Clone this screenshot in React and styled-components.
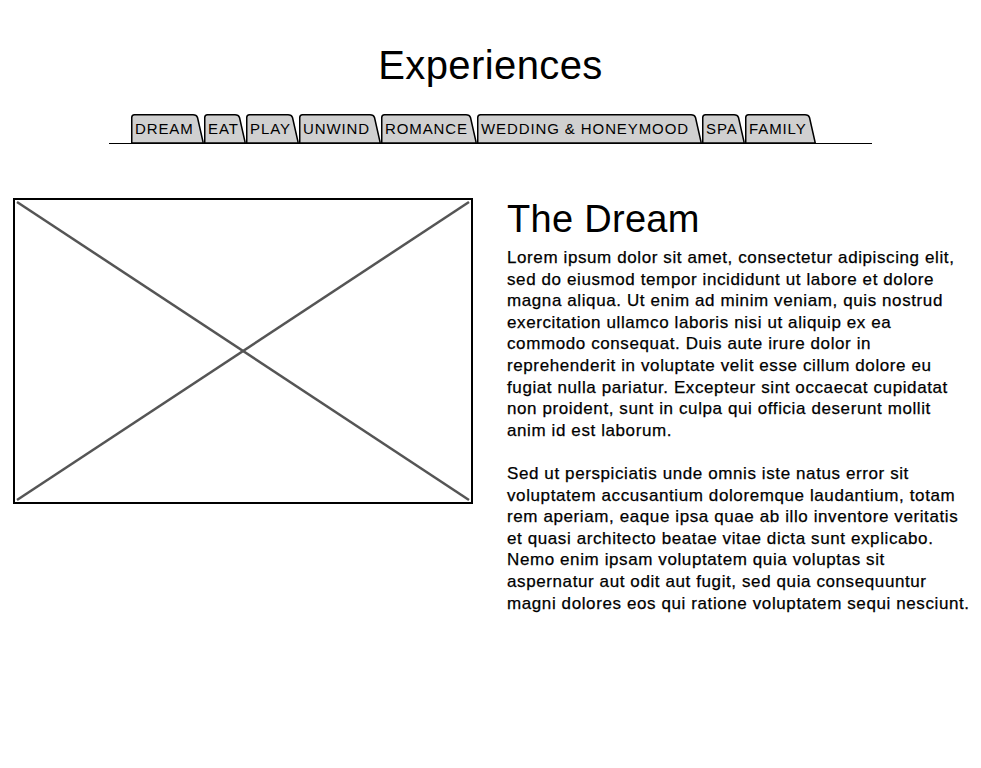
import styled, { createGlobalStyle } from "styled-components";

const GlobalStyle = createGlobalStyle`
  body {
    margin: 0;
    background: #fff;
    color: #000;
    font-family: "Liberation Sans", Arial, sans-serif;
  }
`;

const Page = styled.div`
  width: 981px;
  padding-top: 45px;
`;

const Title = styled.h1`
  margin: 0;
  text-align: center;
  font-size: 40px;
  font-weight: normal;
  line-height: 40px;
  letter-spacing: 0.4px;
`;

const TabBar = styled.div`
  display: flex;
  width: 741px;
  margin: 29px auto 0;
  padding-left: 22px;
  border-bottom: 1.5px solid #000;
`;

const Tab = styled.div`
  position: relative;
  width: ${(p) => p.$w}px;
  height: 29px;

  svg {
    position: absolute;
    left: 0;
    top: 0;
  }
`;

const TabLabel = styled.span`
  position: relative;
  display: block;
  padding-left: 4px;
  font-size: 15px;
  line-height: 30px;
  letter-spacing: 0.9px;
  white-space: nowrap;
`;

const Content = styled.div`
  display: flex;
  align-items: flex-start;
  gap: 34px;
  margin-top: 54px;
  padding-left: 13px;
`;

const ImageBox = styled.div`
  flex-shrink: 0;
  width: 456px;
  height: 302px;
  border: 2px solid #000;

  svg {
    display: block;
  }
`;

const TextColumn = styled.div`
  width: 470px;
  padding-top: 2px;
`;

const Heading = styled.h2`
  margin: 0 0 9px;
  font-size: 38px;
  font-weight: normal;
  line-height: 38px;
  letter-spacing: 0.3px;
`;

const Paragraph = styled.p`
  margin: 0 0 21.6px;
  font-size: 17px;
  line-height: 21.6px;
  letter-spacing: 0.6px;
  white-space: nowrap;
  -webkit-text-stroke: 0.25px #000;
`;

const tabs = [
  { label: "DREAM", w: 73 },
  { label: "EAT", w: 42 },
  { label: "PLAY", w: 53 },
  { label: "UNWIND", w: 82 },
  { label: "ROMANCE", w: 96 },
  { label: "WEDDING & HONEYMOOD", w: 225 },
  { label: "SPA", w: 43 },
  { label: "FAMILY", w: 71 },
];

const paragraphs = [
  [
    "Lorem ipsum dolor sit amet, consectetur adipiscing elit,",
    "sed do eiusmod tempor incididunt ut labore et dolore",
    "magna aliqua. Ut enim ad minim veniam, quis nostrud",
    "exercitation ullamco laboris nisi ut aliquip ex ea",
    "commodo consequat. Duis aute irure dolor in",
    "reprehenderit in voluptate velit esse cillum dolore eu",
    "fugiat nulla pariatur. Excepteur sint occaecat cupidatat",
    "non proident, sunt in culpa qui officia deserunt mollit",
    "anim id est laborum.",
  ],
  [
    "Sed ut perspiciatis unde omnis iste natus error sit",
    "voluptatem accusantium doloremque laudantium, totam",
    "rem aperiam, eaque ipsa quae ab illo inventore veritatis",
    "et quasi architecto beatae vitae dicta sunt explicabo.",
    "Nemo enim ipsam voluptatem quia voluptas sit",
    "aspernatur aut odit aut fugit, sed quia consequuntur",
    "magni dolores eos qui ratione voluptatem sequi nesciunt.",
  ],
];

// tab outline: straight left edge, rounded top-right, slanted right edge
const TabShape = ({ w }) => (
  <svg width={w} height="29" viewBox={`0 0 ${w} 29`}>
    <path
      d={`M0.75 29 V3.5 Q0.75 0.75 3.5 0.75 H${w - 11} Q${w - 7.5} 0.75 ${w - 6.5} 3.5 L${w - 0.75} 29 Z`}
      fill="#d0d0d0"
      stroke="#000"
      strokeWidth="1.5"
      strokeLinejoin="round"
    />
  </svg>
);

const ImagePlaceholder = () => (
  <ImageBox>
    <svg width="456" height="302" viewBox="0 0 456 302">
      <line x1="2" y1="2" x2="454" y2="300" stroke="#555" strokeWidth="2.5" />
      <line x1="454" y1="2" x2="2" y2="300" stroke="#555" strokeWidth="2.5" />
    </svg>
  </ImageBox>
);

const App = () => {
  return (
    <Page>
      <GlobalStyle />
      <Title>Experiences</Title>
      <TabBar>
        {tabs.map((t) => (
          <Tab key={t.label} $w={t.w}>
            <TabShape w={t.w} />
            <TabLabel>{t.label}</TabLabel>
          </Tab>
        ))}
      </TabBar>
      <Content>
        <ImagePlaceholder />
        <TextColumn>
          <Heading>The Dream</Heading>
          {paragraphs.map((lines, i) => (
            <Paragraph key={i}>
              {lines.map((line, j) => (
                <span key={j}>
                  {line}
                  {j < lines.length - 1 && <br />}
                </span>
              ))}
            </Paragraph>
          ))}
        </TextColumn>
      </Content>
    </Page>
  );
};

export default App;
